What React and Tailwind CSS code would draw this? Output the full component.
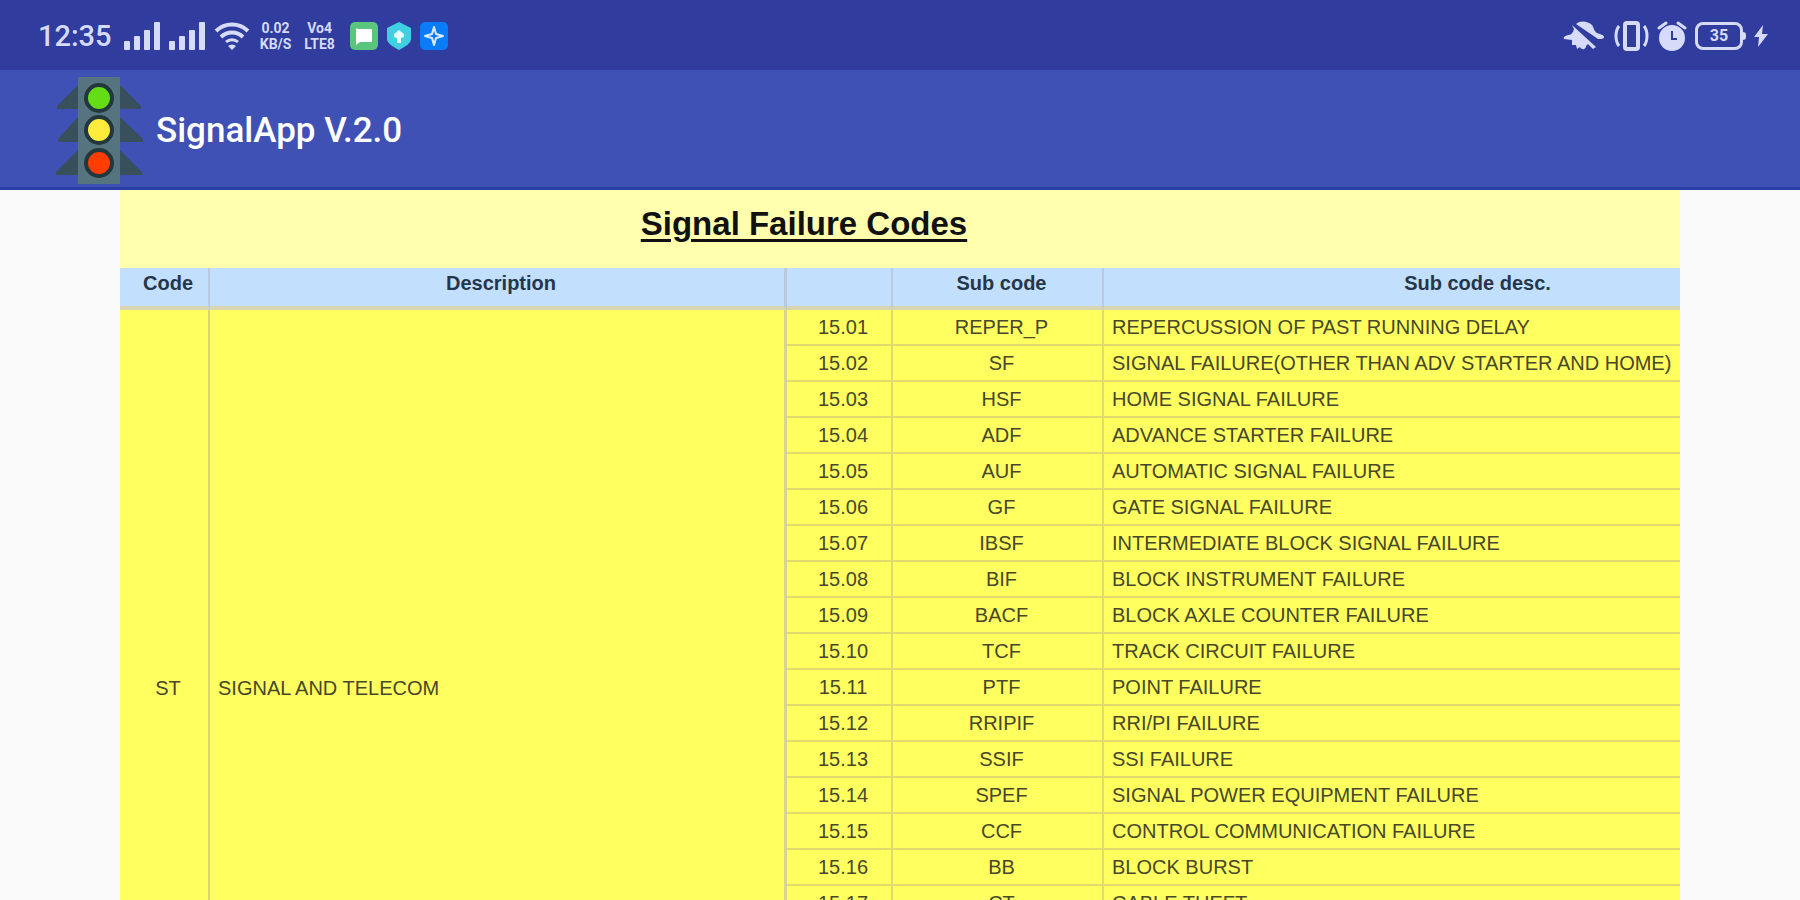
const rows = [
  { no: "15.01", code: "REPER_P", desc: "REPERCUSSION OF PAST RUNNING DELAY" },
  { no: "15.02", code: "SF", desc: "SIGNAL FAILURE(OTHER THAN ADV STARTER AND HOME)" },
  { no: "15.03", code: "HSF", desc: "HOME SIGNAL FAILURE" },
  { no: "15.04", code: "ADF", desc: "ADVANCE STARTER FAILURE" },
  { no: "15.05", code: "AUF", desc: "AUTOMATIC SIGNAL FAILURE" },
  { no: "15.06", code: "GF", desc: "GATE SIGNAL FAILURE" },
  { no: "15.07", code: "IBSF", desc: "INTERMEDIATE BLOCK SIGNAL FAILURE" },
  { no: "15.08", code: "BIF", desc: "BLOCK INSTRUMENT FAILURE" },
  { no: "15.09", code: "BACF", desc: "BLOCK AXLE COUNTER FAILURE" },
  { no: "15.10", code: "TCF", desc: "TRACK CIRCUIT FAILURE" },
  { no: "15.11", code: "PTF", desc: "POINT FAILURE" },
  { no: "15.12", code: "RRIPIF", desc: "RRI/PI FAILURE" },
  { no: "15.13", code: "SSIF", desc: "SSI FAILURE" },
  { no: "15.14", code: "SPEF", desc: "SIGNAL POWER EQUIPMENT FAILURE" },
  { no: "15.15", code: "CCF", desc: "CONTROL COMMUNICATION FAILURE" },
  { no: "15.16", code: "BB", desc: "BLOCK BURST" },
  { no: "15.17", code: "CT", desc: "CABLE THEFT" },
];

function SignalBars() {
  return (
    <svg width="37" height="28" viewBox="0 0 37 28" fill="currentColor" aria-hidden="true">
      <rect x="0" y="19" width="6" height="9" rx="1" />
      <rect x="10" y="14" width="6" height="14" rx="1" />
      <rect x="20" y="8" width="6" height="20" rx="1" />
      <rect x="30" y="0" width="6" height="28" rx="1" />
    </svg>
  );
}

function WifiIcon() {
  return (
    <svg width="36" height="28" viewBox="0 0 36 28" fill="none" stroke="currentColor" strokeWidth="4" aria-hidden="true">
      <path d="M2 9a23 23 0 0 1 32 0" />
      <path d="M7 15a16 16 0 0 1 22 0" />
      <path d="M12 20a9 9 0 0 1 12 0" strokeWidth="3" />
      <path d="M18 28l-4-4a6 6 0 0 1 8 0z" fill="currentColor" stroke="none" />
    </svg>
  );
}

function MessageIcon() {
  return (
    <svg width="28" height="28" viewBox="0 0 28 28" aria-hidden="true">
      <rect width="28" height="28" rx="5" fill="#5ac57c" />
      <path d="M8 7h13a1 1 0 0 1 1 1v11a1 1 0 0 1-1 1H10l-4 3V8a1 1 0 0 1 2-1z" fill="#fff" />
    </svg>
  );
}

function ShieldIcon() {
  return (
    <svg width="26" height="28" viewBox="0 0 26 28" aria-hidden="true">
      <path d="M13 0l12 6v11c0 4-6 8-12 11C7 25 1 21 1 17V6z" fill="#3fd0e2" />
      <path d="M13 8l5 4v3l-3 1v5h-4v-5l-3-1v-3z" fill="#e4fbff" />
    </svg>
  );
}

function SparkIcon() {
  return (
    <svg width="28" height="28" viewBox="0 0 28 28" aria-hidden="true">
      <rect width="28" height="28" rx="5" fill="#0b7cf8" />
      <path d="M14 5l2 7 7 2-7 2-2 7-2-7-7-2 7-2z" fill="#0b7cf8" stroke="#dcecff" strokeWidth="2" strokeLinejoin="round" />
    </svg>
  );
}

function MutedBellIcon() {
  return (
    <svg width="42" height="30" viewBox="0 0 42 30" fill="currentColor" aria-hidden="true">
      <path d="M13 3c4-4 12-3 16 1 2 3 2 6 5 8 3 1 7 2 7 4s-3 2-6 2z" />
      <path d="M9 4l24 22-3 2-5-5-2 2c0 4-5 4-6 1l-3 2-1-4h-4v-5l-8-1c-1-2 1-3 4-4 3 0 5-2 6-6z" />
    </svg>
  );
}

function VibrateIcon() {
  return (
    <svg width="36" height="30" viewBox="0 0 36 30" fill="none" stroke="currentColor" aria-hidden="true">
      <rect x="12" y="2" width="13" height="26" rx="2" strokeWidth="4" />
      <path d="M6 5c-4 5-4 15 0 20M31 5c4 5 4 15 0 20" strokeWidth="3" />
    </svg>
  );
}

function AlarmIcon() {
  return (
    <svg width="30" height="32" viewBox="0 0 30 32" aria-hidden="true">
      <circle cx="15" cy="18" r="13" fill="currentColor" />
      <path d="M2 8l7-5M28 8l-7-5" stroke="currentColor" strokeWidth="3" strokeLinecap="round" />
      <path d="M15 11v8h5" fill="none" stroke="#303c9e" strokeWidth="2" />
    </svg>
  );
}

function TrafficLight() {
  return (
    <svg width="88" height="108" viewBox="0 0 88 108" aria-hidden="true">
      <g fill="#37505c">
        <path d="M22 8v24H1v-3zM64 8v24h21v-3z" />
        <path d="M22 40v25H2v-3zM64 40v25h23v-3z" />
        <path d="M22 73v25H0v-3zM64 73v25h22v-3z" />
      </g>
      <rect x="22" y="0" width="42" height="107" rx="1" fill="#567480" />
      <g stroke="#22383d" strokeWidth="4">
        <circle cx="43" cy="21" r="13" fill="#64dd17" />
        <circle cx="43" cy="53" r="13" fill="#ffeb3b" />
        <circle cx="43" cy="86" r="13" fill="#ff3d00" />
      </g>
    </svg>
  );
}

function StatusBar() {
  return (
    <div className="flex h-[70px] shrink-0 items-center justify-between bg-[#303c9e] pt-px pr-8 pl-[38px] text-[#d5dbf8]">
      <div className="flex items-center gap-2">
        <span className="mr-1 text-[29px] leading-8 font-medium">12:35</span>
        <SignalBars />
        <SignalBars />
        <WifiIcon />
        <span className="flex w-9 flex-col items-center text-sm leading-4 font-bold">
          <span>0.02</span>
          <span>KB/S</span>
        </span>
        <span className="flex w-9 flex-col items-center text-sm leading-4 font-bold">
          <span>Vo4</span>
          <span>LTE8</span>
        </span>
        <span className="flex items-center gap-2 pl-1">
          <MessageIcon />
          <ShieldIcon />
          <SparkIcon />
        </span>
      </div>
      <div className="flex items-center gap-2">
        <MutedBellIcon />
        <VibrateIcon />
        <AlarmIcon />
        <span className="flex items-center">
          <span className="flex h-7 w-12 items-center justify-center rounded-lg border-3 border-current text-base font-bold">35</span>
          <span className="h-2 w-[3px] rounded-r bg-current" />
        </span>
        <svg width="14" height="22" viewBox="0 0 14 22" fill="currentColor" aria-hidden="true">
          <path d="M9 0L0 12h5l-1 10 10-13H8z" />
        </svg>
      </div>
    </div>
  );
}

function AppBar() {
  return (
    <header className="flex h-[120px] shrink-0 items-center gap-3 border-b-3 border-[#2a3fa6] bg-[#3f51b5] pt-1 pl-14">
      <TrafficLight />
      <h1 className="text-[35px] leading-10 font-medium text-white">SignalApp V.2.0</h1>
    </header>
  );
}

export default function App() {
  return (
    <div className="flex h-screen flex-col overflow-hidden bg-[#fafafa] font-[Roboto,sans-serif]">
      <StatusBar />
      <AppBar />
      <main className="mx-[120px] flex-1 overflow-hidden bg-[#ffff60] font-['Liberation_Sans',Arial,sans-serif]">
        <h2 className="h-[78px] bg-[#ffffae] pt-[14px] pr-48 text-center text-[33px] leading-10 font-bold text-[#111] underline decoration-3 underline-offset-4">
          Signal Failure Codes
        </h2>
        {/* the last column runs past the right edge */}
        <table className="w-[calc(100%+171px)] table-fixed border-separate border-spacing-0 text-xl leading-6 text-[#47472a]">
          <colgroup>
            <col className="w-[90px]" />
            <col className="w-[577px]" />
            <col className="w-[106px]" />
            <col className="w-[211px]" />
            <col />
          </colgroup>
          <thead className="bg-[#c3dffe] text-[#26364a]">
            <tr className="h-[42px] [&>th]:border-b-4 [&>th]:border-b-[#d9d5b0] [&>th]:pb-2">
              <th className="border-r-2 border-r-[#b9cadd] pl-2">Code</th>
              <th className="border-r-3 border-r-[#b9cadd] pl-2">Description</th>
              <th className="border-r-2 border-r-[#b9cadd]" />
              <th className="border-r-2 border-r-[#b9cadd] pl-2">Sub code</th>
              <th>Sub code desc.</th>
            </tr>
          </thead>
          <tbody>
            {rows.map((row, index) => (
              <tr key={row.no} className="h-9">
                {index === 0 && (
                  <>
                    <td rowSpan={rows.length + 1} className="border-r-2 border-[#d9d56f] pl-2 text-center">
                      ST
                    </td>
                    <td rowSpan={rows.length + 1} className="border-r-3 border-[#d9d58c] px-2">
                      SIGNAL AND TELECOM
                    </td>
                  </>
                )}
                <td className="border-r-2 border-b-2 border-[#dfdb6c] pl-2 text-center">{row.no}</td>
                <td className="border-r-2 border-b-2 border-[#dfdb6c] pl-2 text-center">{row.code}</td>
                <td className="border-b-2 border-[#dfdb6c] px-2 whitespace-nowrap">{row.desc}</td>
              </tr>
            ))}
            <tr className="h-36">
              <td colSpan={3} />
            </tr>
          </tbody>
        </table>
      </main>
    </div>
  );
}
